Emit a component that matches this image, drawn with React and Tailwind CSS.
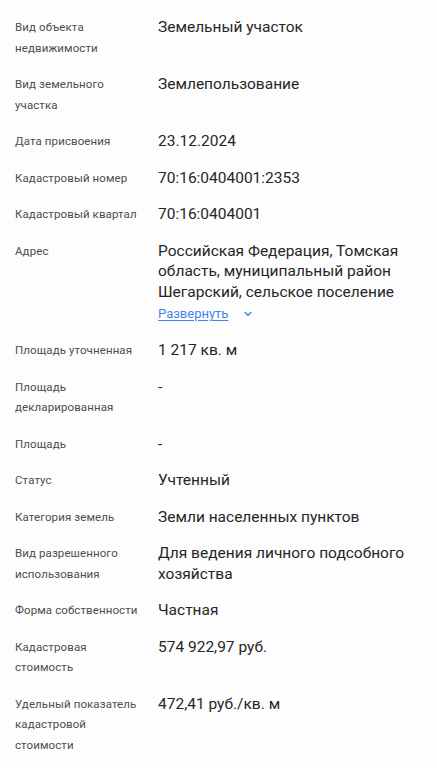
const rows = [
  { label: 'Вид объекта недвижимости', value: 'Земельный участок' },
  { label: 'Вид земельного участка', value: 'Землепользование' },
  { label: 'Дата присвоения', value: '23.12.2024' },
  { label: 'Кадастровый номер', value: '70:16:0404001:2353' },
  { label: 'Кадастровый квартал', value: '70:16:0404001' },
  {
    label: 'Адрес',
    value: 'Российская Федерация, Томская область, муниципальный район Шегарский, сельское поселение',
    expandable: true,
  },
  { label: 'Площадь уточненная', value: '1 217 кв. м' },
  { label: 'Площадь декларированная', value: '-' },
  { label: 'Площадь', value: '-' },
  { label: 'Статус', value: 'Учтенный' },
  { label: 'Категория земель', value: 'Земли населенных пунктов' },
  { label: 'Вид разрешенного использования', value: 'Для ведения личного подсобного хозяйства' },
  { label: 'Форма собственности', value: 'Частная' },
  { label: 'Кадастровая стоимость', value: '574 922,97 руб.' },
  { label: 'Удельный показатель кадастровой стоимости', value: '472,41 руб./кв. м' },
]

function Row({ label, value, expandable }) {
  return (
    <div className="grid grid-cols-[143px_1fr] py-[8px]">
      <div className="pr-[12px] text-[11.5px] leading-[20.5px] tracking-[0.1px] text-[#4d4d4d]">{label}</div>
      <div className="text-[15.5px] leading-[20.5px] text-[#262626]">
        <div>{value}</div>
        {expandable && (
          <button className="mt-[2px] flex items-center gap-[14px] text-[13px] leading-[20px] text-[#3d86ec]">
            <span className="underline underline-offset-2">Развернуть</span>
            <svg width="12" height="12" viewBox="0 0 24 24" fill="none" stroke="currentColor" strokeWidth="2.5" strokeLinecap="round" strokeLinejoin="round">
              <path d="M6 9l6 6 6-6" />
            </svg>
          </button>
        )}
      </div>
    </div>
  )
}

export default function App() {
  return (
    <div className="min-h-screen bg-[#fdfdfd] pl-[15px] pr-[20px] pt-[9px] font-['Roboto',sans-serif]">
      {rows.map((r) => (
        <Row key={r.label} {...r} />
      ))}
    </div>
  )
}
